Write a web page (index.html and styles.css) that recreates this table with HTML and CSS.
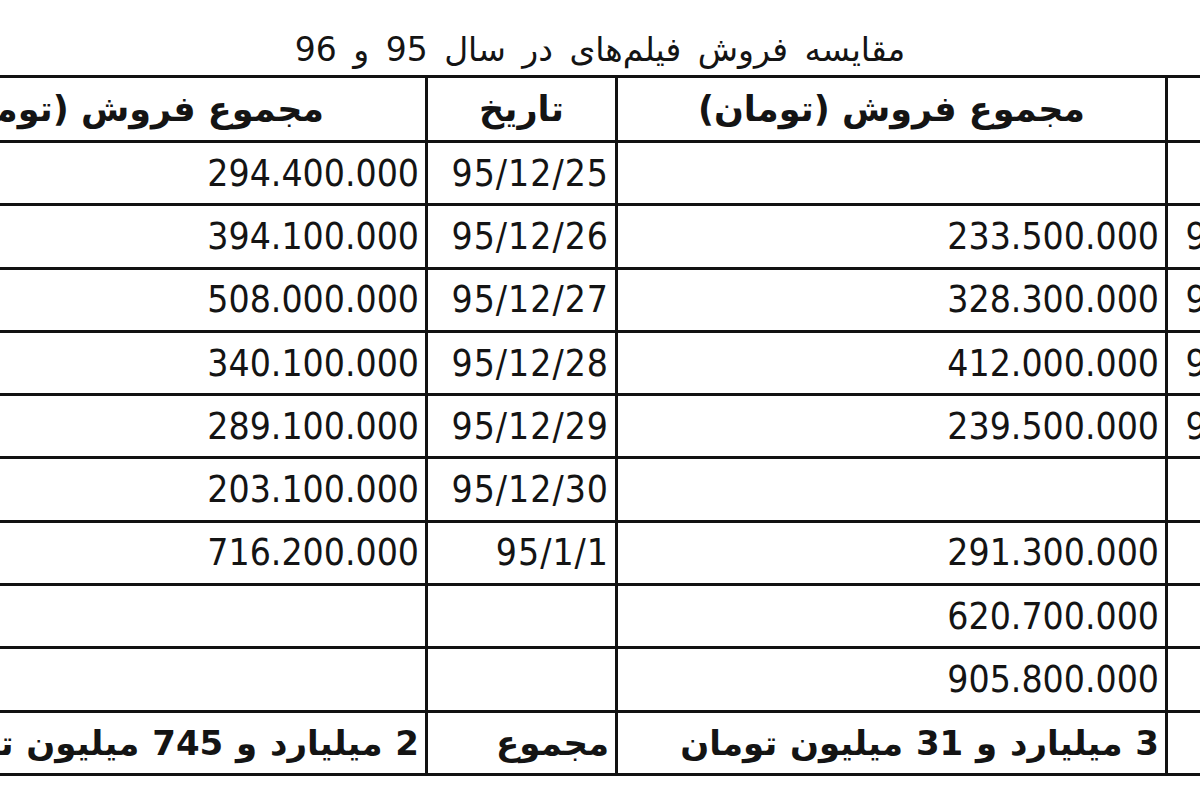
FILE: index.html
```html
<!DOCTYPE html>
<html lang="fa" dir="rtl">
<head>
<meta charset="utf-8">
<title>مقایسه فروش فیلم‌های در سال 95 و 96</title>
<link rel="stylesheet" href="styles.css">
</head>
<body>
<div class="page">
  <div class="caption">مقایسه فروش فیلم‌های در سال 95 و 96</div>
  <div class="wrap">
    <table class="sales">
      <colgroup>
        <col class="c-date">
        <col class="c-sum96">
        <col class="c-date">
        <col class="c-sum95">
      </colgroup>
      <thead>
        <tr class="head">
          <th>تاریخ</th>
          <th>مجموع فروش (تومان)</th>
          <th>تاریخ</th>
          <th>مجموع فروش (تومان)</th>
        </tr>
      </thead>
      <tbody>
        <tr><td class="num date d96"></td><td class="num"></td><td class="num date">95/12/25</td><td class="num">294.400.000</td></tr>
        <tr><td class="num date d96">96/12/26</td><td class="num">233.500.000</td><td class="num date">95/12/26</td><td class="num">394.100.000</td></tr>
        <tr><td class="num date d96">96/12/27</td><td class="num">328.300.000</td><td class="num date">95/12/27</td><td class="num">508.000.000</td></tr>
        <tr><td class="num date d96">96/12/28</td><td class="num">412.000.000</td><td class="num date">95/12/28</td><td class="num">340.100.000</td></tr>
        <tr><td class="num date d96">96/12/29</td><td class="num">239.500.000</td><td class="num date">95/12/29</td><td class="num">289.100.000</td></tr>
        <tr><td class="num date d96"></td><td class="num"></td><td class="num date">95/12/30</td><td class="num">203.100.000</td></tr>
        <tr><td class="num date d96">96/1/1</td><td class="num">291.300.000</td><td class="num date">95/1/1</td><td class="num">716.200.000</td></tr>
        <tr><td class="num date d96">96/1/2</td><td class="num">620.700.000</td><td class="num date"></td><td class="num"></td></tr>
        <tr><td class="num date d96">96/1/3</td><td class="num">905.800.000</td><td class="num date"></td><td class="num"></td></tr>
        <tr class="total"><td class="label d96">مجموع</td><td class="bold">3 میلیارد و 31 میلیون تومان</td><td class="label">مجموع</td><td class="bold">2 میلیارد و 745 میلیون تومان</td></tr>
      </tbody>
    </table>
  </div>
</div>
</body>
</html>
```
FILE: styles.css
```css
html, body {
  margin: 0;
  padding: 0;
  background: #ffffff;
}
body {
  font-family: "DejaVu Sans", sans-serif;
  color: #141414;
}
.page {
  width: 1200px;
  height: 800px;
  overflow: hidden;
}
.caption {
  height: 75px;
  box-sizing: border-box;
  padding-top: 29px;
  text-align: center;
  font-size: 33px;
  line-height: 42px;
  word-spacing: 6px;
  direction: rtl;
}
.wrap {
  direction: ltr;
  width: 1200px;
}
.sales {
  direction: rtl;
  border-collapse: collapse;
  table-layout: fixed;
  width: 1522px;
  margin-left: -167px;
}
.c-date { width: 190px; }
.c-sum96 { width: 550px; }
.c-sum95 { width: 592px; }
.sales th,
.sales td {
  border: 3px solid #111;
  padding: 0 6px 0 6px;
  white-space: nowrap;
  overflow: hidden;
  vertical-align: middle;
}
.sales th {
  font-weight: bold;
  font-size: 35px;
  text-align: center;
}
.head { height: 65px; }
.sales tbody tr { height: 63.3px; }
.num {
  font-family: "DejaVu Sans Condensed", "DejaVu Sans", sans-serif;
  text-align: right;
  font-size: 37px;
  direction: ltr;
}
.sales td.num { text-align: right; }
.date {
  letter-spacing: 1px;
}
.sales td.d96 {
  padding-right: 12px;
}
.bold {
  font-weight: bold;
  font-size: 34px;
  text-align: right;
}
.label {
  font-weight: bold;
  font-size: 34px;
  text-align: right;
}
.total .bold {
  word-spacing: 1px;
}
```
